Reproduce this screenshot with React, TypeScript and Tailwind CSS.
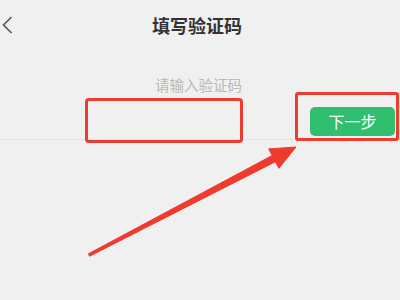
export default function App() {
  return (
    <div
      className="relative w-[400px] h-[300px] overflow-hidden bg-[#f0f0f0]"
      style={{ fontFamily: '"Noto Sans CJK SC", "Noto Sans", sans-serif' }}
    >
      {/* Header */}
      <div className="flex h-[50px] items-center">
        <div className="w-[40px] pl-[2px]">
          <svg width="12" height="20" viewBox="0 0 12 20" fill="none">
            <path d="M9.5 2 L1.5 10 L9.5 18" stroke="#555" strokeWidth="1.6" />
          </svg>
        </div>
        <div className="flex-1 text-center text-[18px] leading-[20px] font-bold text-[#333] pr-[46px]">
          填写验证码
        </div>
      </div>

      {/* Placeholder */}
      <div className="mt-[25px] pl-[155px] text-[14.5px] leading-[20px] text-[#b8b8b8]">
        请输入验证码
      </div>

      {/* Input row */}
      <div className="flex h-[45px] items-end border-b border-[#e4e4e4] pb-[3px]">
        <div className="flex-1" />
        <button className="mr-[5px] h-[29px] w-[85px] rounded-[5px] bg-[#2fbf6f] text-[16px] leading-[29px] text-white">
          下一步
        </button>
      </div>

      {/* Annotations */}
      <div className="absolute left-[85px] top-[98px] h-[45px] w-[158px] rounded-[4px] border-[3px] border-[#ee3b30]" />
      <div className="absolute left-[295px] top-[92px] h-[49px] w-[104px] rounded-[3px] border-[3px] border-[#ee3b30]" />
      <svg
        className="absolute left-0 top-0"
        width="400"
        height="300"
        viewBox="0 0 400 300"
      >
        <polygon
          points="88.4,253.8 272.2,155.5 268.7,148.9 296,147 278.9,168.3 275.4,161.7 89.6,256.2"
          fill="#f03a2e"
          stroke="#f03a2e"
          strokeWidth="1"
          strokeLinejoin="round"
        />
      </svg>
    </div>
  );
}
